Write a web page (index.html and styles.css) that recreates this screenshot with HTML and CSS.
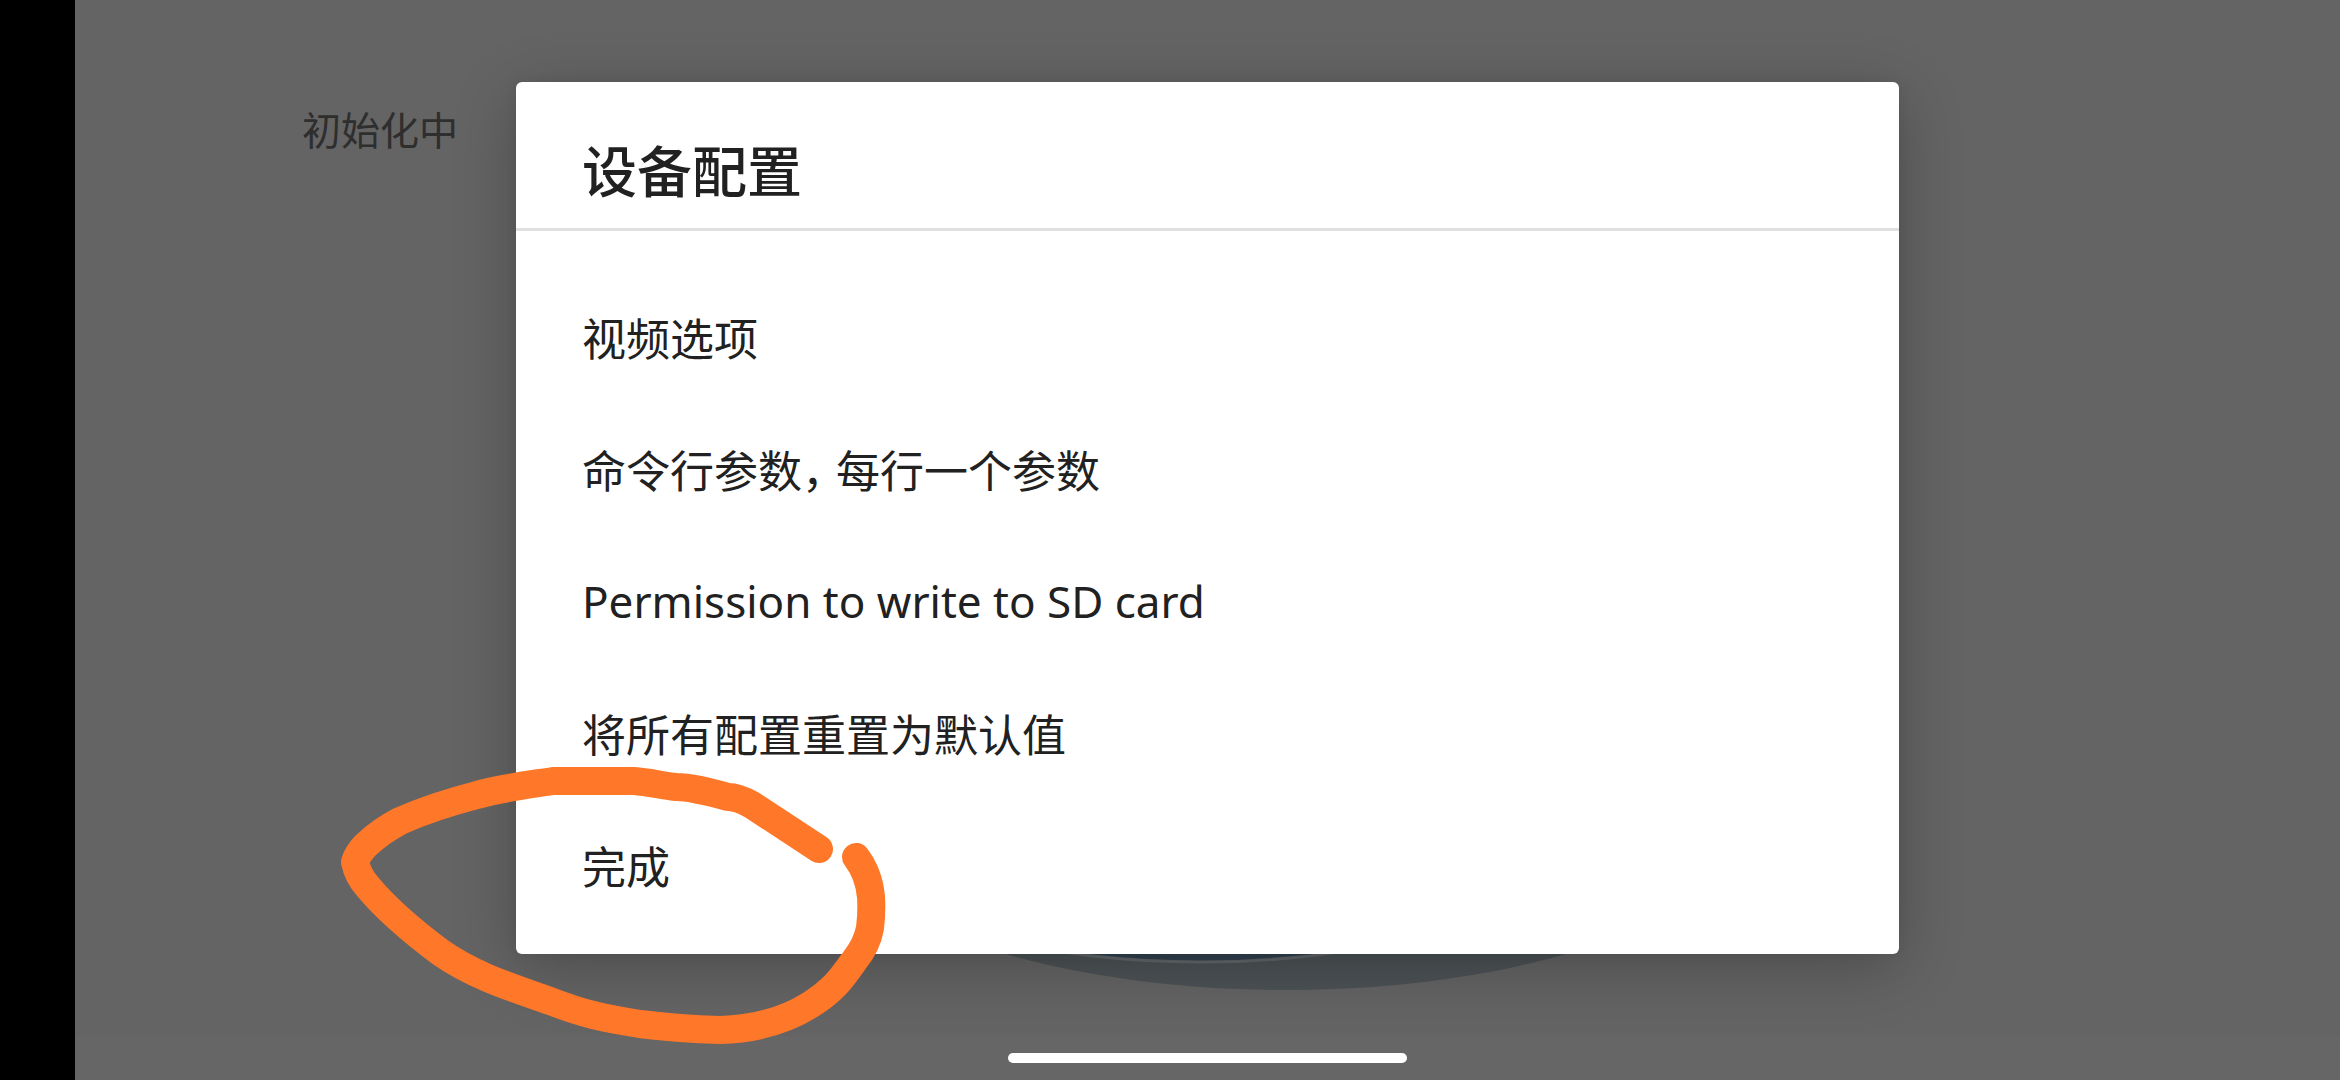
FILE: index.html
```html
<!DOCTYPE html>
<html lang="zh-CN">
<head>
<meta charset="utf-8">
<meta name="viewport" content="width=device-width, initial-scale=1">
<title>设备配置</title>
<link rel="stylesheet" href="styles.css">
</head>
<body>
<div class="device">
  <div class="cutout"></div>
  <div class="screen">
    <main class="stage">
      <p class="status">初始化中</p>
      <svg class="logo" viewBox="0 0 980 400" aria-hidden="true">
        <ellipse class="logo-disc" cx="490" cy="200" rx="490" ry="200"/>
        <ellipse class="logo-core" cx="405" cy="283" rx="300" ry="89"/>
      </svg>
      <section class="dialog" role="dialog" aria-labelledby="dialog-title">
        <h1 class="dialog-title" id="dialog-title">设备配置</h1>
        <ul class="options">
          <li><button class="option" type="button">视频选项</button></li>
          <li><button class="option" type="button">命令行参数<span class="comma">，</span>每行一个参数</button></li>
          <li><button class="option option-latin" type="button">Permission to write to SD card</button></li>
          <li><button class="option" type="button">将所有配置重置为默认值</button></li>
          <li><button class="option" type="button">完成</button></li>
        </ul>
      </section>
    </main>
    <footer class="navbar"><span class="handle"></span></footer>
  </div>
  <svg class="marker" viewBox="330 750 570 310" aria-hidden="true">
    <path d="M819 849L752 805Q738 797 728 797C706 791 690 787 676 787C660 785 648 782 634 781Q595 781 553 781C527 785 501 788 477 795Q434 806 400 821Q381 831 366 845Q358 853 355 862Q358 876 368 887C388 911 416 934 440 952C474 976 513 988 550 1001C584 1014 602 1018 640 1024Q680 1029 720 1030C756 1029 786 1020 810 1005C834 990 842 978 854 961Q867 945 870 928Q872 912 871 897Q869 874 856 857"/>
  </svg>
</div>
</body>
</html>
```
FILE: styles.css
```css
* {
  box-sizing: border-box;
}

body {
  margin: 0;
  font-family: "Noto Sans CJK SC", sans-serif;
  color: #212121;
}

.device {
  position: relative;
  display: flex;
  min-height: 100vh;
  overflow: hidden;
}

.cutout {
  flex: 0 0 75px;
  background: #000;
}

.screen {
  flex: 1;
  display: flex;
  flex-direction: column;
}

.stage {
  position: relative;
  flex: 1;
  display: flex;
  align-items: center;
  justify-content: center;
  background: #646464;
}

.status {
  position: absolute;
  top: 98px;
  left: 227px;
  margin: 0;
  font-size: 39px;
  line-height: 60px;
  color: #2e2e2e;
}

.logo {
  position: absolute;
  bottom: 46px;
  left: 50%;
  width: 980px;
  height: 400px;
  margin-left: -412px;
}

.logo-disc {
  fill: #4c5255;
}

.logo-core {
  fill: #32424f;
  stroke: #62676a;
  stroke-width: 3px;
}

.dialog {
  position: relative;
  width: 61.06%;
  border-radius: 6px;
  background: #fff;
  box-shadow: 0 14px 64px rgba(0, 0, 0, 0.24), 0 0 12px rgba(0, 0, 0, 0.06);
}

.dialog-title {
  margin: 0;
  padding: 46px 66px 20px;
  border-bottom: 3px solid #e0e0e0;
  font-size: 55px;
  font-weight: 500;
  line-height: 80px;
}

.options {
  margin: 0;
  padding: 40px 0 23px;
  list-style: none;
}

.option {
  display: block;
  width: 100%;
  height: 132px;
  padding: 0 66px;
  border: 0;
  background: none;
  color: inherit;
  font: inherit;
  font-size: 44px;
  line-height: 64px;
  text-align: left;
  cursor: pointer;
}

.option-latin {
  font-family: "Noto Sans", "Noto Sans CJK SC", sans-serif;
}

.comma {
  margin-right: 12px;
  font-feature-settings: "halt";
}

.navbar {
  display: flex;
  align-items: center;
  justify-content: center;
  height: 44px;
  background: #666;
}

.handle {
  width: 399px;
  height: 10px;
  border-radius: 5px;
  background: #fff;
}

.marker {
  position: absolute;
  top: 750px;
  left: 330px;
  width: 570px;
  height: 310px;
  pointer-events: none;
}

.marker path {
  fill: none;
  stroke: #ff7729;
  stroke-width: 28px;
  stroke-linecap: round;
  stroke-linejoin: round;
}
```
